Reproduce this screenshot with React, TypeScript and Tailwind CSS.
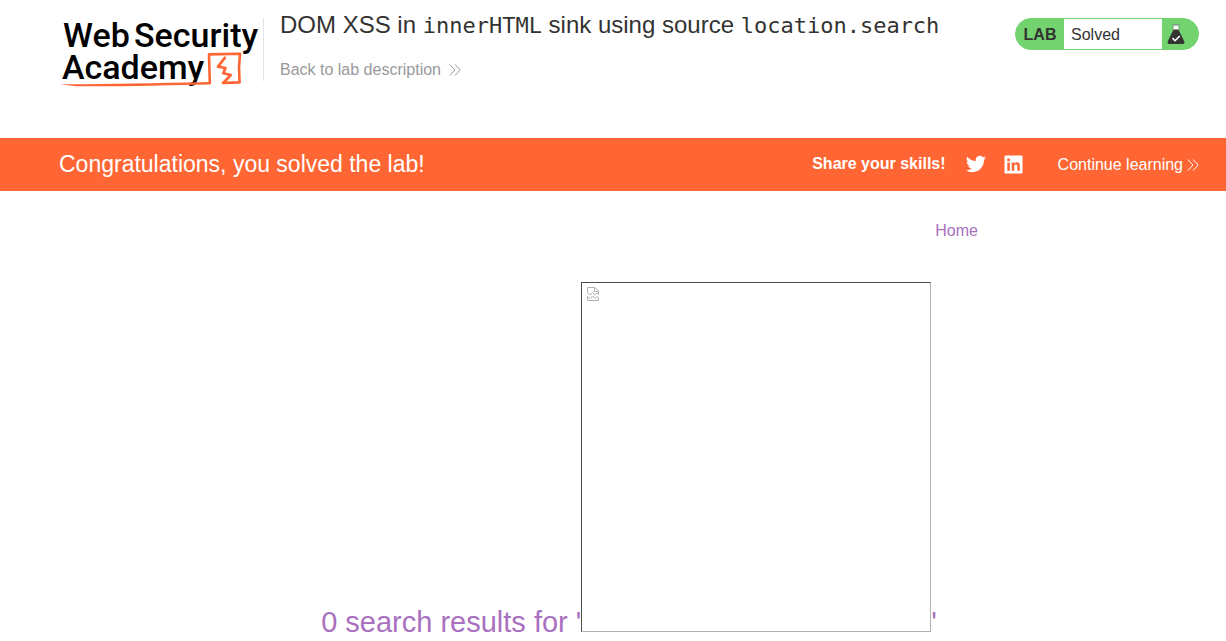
import React from "react";

function Chevrons({ className }: { className?: string }) {
  return (
    <svg viewBox="0 0 12 12" className={`h-3 w-3 ${className ?? ""}`} fill="none" stroke="currentColor" strokeWidth="1" aria-hidden="true">
      <path d="M0.8 0.5 6 6 0.8 11.5M6 0.5 11.2 6 6 11.5" />
    </svg>
  );
}

function Logo() {
  return (
    <svg viewBox="0 0 200 76" className="h-19 w-50" role="img" aria-label="Web Security Academy">
      <text className="fill-black font-['Roboto',sans-serif] text-[34px] font-medium">
        <tspan x="3" y="31">Web</tspan>
        <tspan x="74" y="31">Security</tspan>
        <tspan x="2" y="63">Academy</tspan>
      </text>
      <g fill="none" stroke="#ff6633" strokeLinejoin="round" strokeLinecap="round">
        <path d="M149.8 67 149 38.4 180 37.8 179 52 179.6 66.4 163 66.9" strokeWidth="2.6" />
        <path d="M164.8 41.8 158 50.6 165.5 52 163.3 57.2 170.8 59 163.8 66.4" strokeWidth="2.7" />
      </g>
      <path d="M0 68.2C40 68.4 90 67.2 150 66V68.4C110 69 65 70.6 16 70.3Z" fill="#ff6633" />
    </svg>
  );
}

function Flask() {
  return (
    <svg viewBox="0 0 18 22" className="h-[22px] w-[18px]" role="img" aria-label="Solved">
      <path d="M6 2H12V7H6Z" fill="#fff" />
      <path d="M5.5 2H12.5" stroke="#777" strokeWidth="1" />
      <path d="M6 2V7M12 2V7" stroke="#6b8b6b" strokeWidth="0.8" />
      <path d="M6.5 6.5H11.5L17.3 18.5Q17.8 21 16 21H2Q0.2 21 0.7 18.5Z" fill="#333332" />
      <path d="M5.5 15 8 17.7 12.8 13" fill="none" stroke="#fff" strokeWidth="1.6" />
    </svg>
  );
}

function BrokenImage() {
  return (
    <svg viewBox="0 0 14 16" className="mx-1 my-[3px] h-4 w-[14px]" fill="none" stroke="#b2b2b2" aria-hidden="true">
      <path d="M1.5 7V1.5H9L12.5 5V8M8.5 1.5V5.5H12.5M1.5 6.5 4 9 6.5 6.5 9 9 11 7 12.5 8.5M1.5 14.5H12.5V11.5L11 10.5 9 12.5 6.5 10 4 12.5 1.5 10.5Z" />
    </svg>
  );
}

export default function App() {
  return (
    <div className="bg-white pb-1 font-['Liberation_Sans',Arial,sans-serif] text-base text-[#333332]">
      <header className="pl-8">
        <div className="mx-auto flex h-[138px] max-w-[1140px] items-start">
          <a href="#academy" className="ml-px mt-4 shrink-0">
            <Logo />
          </a>
          <div className="ml-[3px] mt-[18px] h-[63px] border-l border-[#e5e5e5]" />
          <div className="ml-4 min-w-0 flex-1 pt-[9px]">
            <h2 className="text-2xl leading-8">
              DOM XSS in <code className="font-['DejaVu_Sans_Mono',monospace] text-[22px]">innerHTML</code> sink using source{" "}
              <code className="font-['DejaVu_Sans_Mono',monospace] text-[22px]">location.search</code>
            </h2>
            <a href="#lab" className="mt-4 inline-flex items-center gap-2 leading-6 text-[#999999]">
              Back to lab description
              <Chevrons />
            </a>
          </div>
          <div className="mt-[18px] flex h-8 w-[184px] shrink-0 items-stretch overflow-hidden rounded-full border border-[#72d36f] bg-[#72d36f]">
            <span className="flex w-12 items-center justify-center pt-0.5 font-bold">LAB</span>
            <p className="flex flex-1 items-center bg-white pt-0.5 pl-[7px]">Solved</p>
            <span className="flex w-9 items-center pl-[5px]">
              <Flask />
            </span>
          </div>
        </div>
      </header>

      <section className="bg-[#ff6633] pl-8 text-white">
        <div className="mx-auto flex h-[53px] max-w-[1140px] items-center">
          <h4 className="flex-1 text-[23px]">Congratulations, you solved the lab!</h4>
          <span className="pb-0.5 font-bold">Share your skills!</span>
          <a href="#twitter" aria-label="Share on Twitter" className="ml-5 pb-px">
            <svg viewBox="0 0 24 24" className="h-5 w-5" fill="currentColor">
              <path d="M23.95 4.57a10 10 0 0 1-2.82.77 4.96 4.96 0 0 0 2.16-2.72c-.95.56-2 .96-3.13 1.18a4.92 4.92 0 0 0-8.38 4.48C7.69 8.1 4.07 6.13 1.64 3.16a4.92 4.92 0 0 0 1.52 6.57 4.9 4.9 0 0 1-2.23-.61v.06a4.92 4.92 0 0 0 3.95 4.83 5 5 0 0 1-2.21.08 4.94 4.94 0 0 0 4.6 3.42A9.87 9.87 0 0 1 0 19.54a13.99 13.99 0 0 0 7.55 2.21c9.05 0 14-7.5 14-13.98 0-.21 0-.42-.02-.63a9.94 9.94 0 0 0 2.42-2.57z" />
            </svg>
          </a>
          <a href="#linkedin" aria-label="Share on LinkedIn" className="ml-[18px]">
            <svg viewBox="0 0 19 19" className="h-[19px] w-[19px]">
              <rect x="0.5" y="0.5" width="18" height="18" rx="1" fill="#fff" />
              <g fill="#ff6633">
                <circle cx="4.6" cy="4.8" r="1.5" />
                <path d="M3.3 7.4H5.9V15.8H3.3ZM7.7 7.4H10.2V8.6C10.7 7.8 11.6 7.2 12.8 7.2 15.3 7.2 15.9 8.8 15.9 11.1V15.8H13.3V11.7C13.3 10.5 13.2 9.4 11.9 9.4 10.6 9.4 10.3 10.4 10.3 11.6V15.8H7.7Z" />
              </g>
            </svg>
          </a>
          <a href="#next" className="ml-[35px] flex items-center gap-1">
            Continue learning
            <Chevrons />
          </a>
        </div>
      </section>

      <main className="pl-8">
        <div className="mx-auto max-w-[698px] pt-7 text-[#aa70c0]">
          <nav className="flex justify-end leading-6">
            <a href="#home">Home</a>
          </nav>
          <h1 className="mt-[39px] text-center text-[29px] leading-9 whitespace-nowrap">
            0 search results for '
            <span
              role="img"
              aria-label="Broken image"
              className="inline-block h-[350px] w-[350px] overflow-hidden border border-t-[#4c4c4c] border-r-[#b2b2b2] border-b-[#b2b2b2] border-l-[#4c4c4c]"
            >
              <BrokenImage />
            </span>
            '
          </h1>
        </div>
      </main>
    </div>
  );
}
